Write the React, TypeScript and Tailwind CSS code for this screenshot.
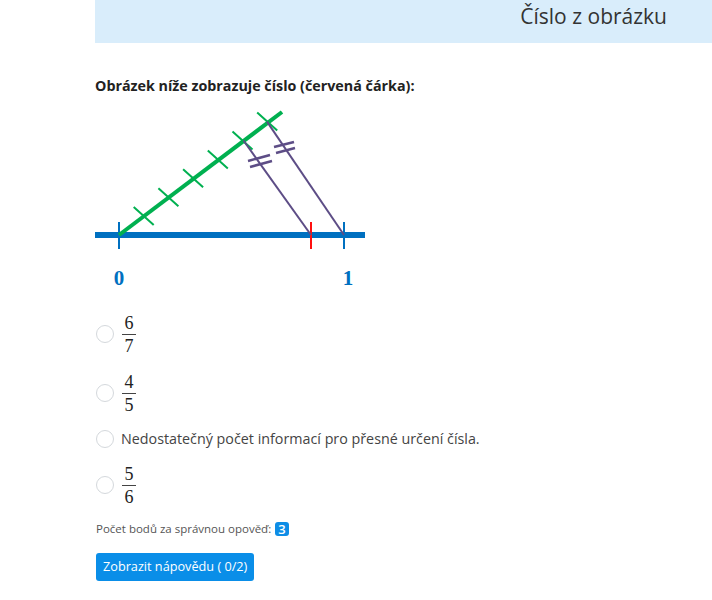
import React from "react";

const ui = "font-['Open_Sans','Liberation_Sans',sans-serif]";

function Fraction({ top, bottom }: { top: string; bottom: string }) {
  return (
    <span className="inline-flex flex-col items-center font-['Liberation_Serif','DejaVu_Serif',serif] text-[18px] leading-[22px] text-[#222]">
      <span>{top}</span>
      <span className="block h-px w-[14px] bg-[#444]" />
      <span>{bottom}</span>
    </span>
  );
}

function Radio() {
  return <span className="block h-[18px] w-[18px] shrink-0 rounded-full border border-[#d4d8dc] bg-white" />;
}

function Diagram() {
  const blue = "#0070c0";
  const green = "#00b050";
  const purple = "#5d4d86";
  const ticks = [1, 2, 3, 4, 5, 6].map((k) => ({ x: 24 + k * 24.7, y: 135 - k * 18.9 }));
  return (
    <svg width="280" height="195" viewBox="0 0 280 195" className="block">
      <line x1="0" y1="135" x2="270" y2="135" stroke={blue} strokeWidth="6" />
      <line x1="24" y1="122" x2="24" y2="149" stroke={blue} strokeWidth="2" />
      <line x1="249" y1="122" x2="249" y2="149" stroke={blue} strokeWidth="2" />
      <line x1="216" y1="122" x2="216" y2="149" stroke="#ff1010" strokeWidth="2" />

      <line x1="24" y1="135" x2="187" y2="12" stroke={green} strokeWidth="4" />
      {ticks.map((t, i) => (
        <line key={i} x1={t.x - 10} y1={t.y - 9} x2={t.x + 10} y2={t.y + 9} stroke={green} strokeWidth="2" />
      ))}

      <line x1="148.5" y1="40.5" x2="216" y2="135" stroke={purple} strokeWidth="2" />
      <line x1="172" y1="21.6" x2="249" y2="135" stroke={purple} strokeWidth="2" />

      <line x1="153" y1="61" x2="175" y2="55" stroke={purple} strokeWidth="2.5" />
      <line x1="155" y1="67" x2="177" y2="61" stroke={purple} strokeWidth="2.5" />
      <line x1="179" y1="47" x2="199" y2="42" stroke={purple} strokeWidth="2.5" />
      <line x1="181" y1="53" x2="200" y2="48" stroke={purple} strokeWidth="2.5" />

      <text x="24" y="185" textAnchor="middle" fill={blue} fontSize="21" fontWeight="bold" fontFamily="'Liberation Serif', serif">
        0
      </text>
      <text x="253" y="185" textAnchor="middle" fill={blue} fontSize="21" fontWeight="bold" fontFamily="'Liberation Serif', serif">
        1
      </text>
    </svg>
  );
}

export default function App() {
  return (
    <div className={`min-h-[600px] w-[712px] bg-white ${ui}`}>
      <div className="ml-[95px]">
        <div className="flex h-[43px] items-start justify-end bg-[#d9edfb] pr-[45px] pt-[3px]">
          <h1 className="text-[21px] font-normal leading-[26px] text-[#333]">Číslo z obrázku</h1>
        </div>

        <p className="mt-[33px] text-[14.3px] font-bold leading-[20px] text-[#222]">
          Obrázek níže zobrazuje číslo (červená čárka):
        </p>

        <div className="mt-1">
          <Diagram />
        </div>

        <div className="mt-[14px] flex flex-col gap-[9px]">
          <label className="flex h-[50px] items-center gap-[8px] pl-[1px]">
            <Radio />
            <Fraction top="6" bottom="7" />
          </label>
          <label className="flex h-[50px] items-center gap-[8px] pl-[1px]">
            <Radio />
            <Fraction top="4" bottom="5" />
          </label>
          <label className="flex h-[24px] items-center gap-[7px] pl-[1px]">
            <Radio />
            <span className="text-[14.3px] text-[#444]">Nedostatečný počet informací pro přesné určení čísla.</span>
          </label>
          <label className="flex h-[50px] items-center gap-[8px] pl-[1px]">
            <Radio />
            <Fraction top="5" bottom="6" />
          </label>
        </div>

        <div className="mt-[10px] flex h-[18px] items-center gap-[4px] pl-[1px] text-[11.5px] text-[#555]">
          <span>Počet bodů za správnou opověď:</span>
          <span className="flex h-[14px] items-center rounded-[3px] bg-[#0d8de6] px-[3px] text-[13px] font-semibold leading-none text-white">
            3
          </span>
        </div>

        <button className="mt-[15px] ml-px h-[28px] rounded-[3px] bg-[#0a8ee8] px-[7px] text-[12.7px] text-white">
          Zobrazit nápovědu ( 0/2)
        </button>
      </div>
    </div>
  );
}
